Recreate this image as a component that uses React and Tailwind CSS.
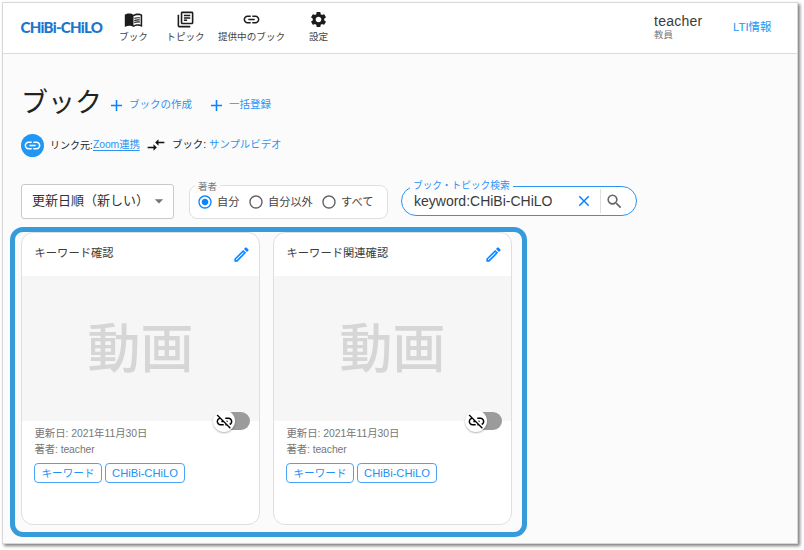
import React from "react";
import {
  MdMenuBook, MdOutlineLibraryBooks, MdLink, MdSettings, MdAdd, MdCompareArrows,
  MdArrowDropDown, MdClose, MdSearch, MdOutlineEdit, MdLinkOff,
  MdRadioButtonChecked, MdRadioButtonUnchecked,
} from "react-icons/md";

function NavItem({ icon: Icon, label, width }) {
  return (
    <a className={`flex flex-col items-center ${width}`}>
      <Icon className="size-[19px] text-[#1c1c1c]" />
      <span className="mt-[1px] ml-px text-[9.6px] leading-[14px] whitespace-nowrap text-[#444]">{label}</span>
    </a>
  );
}

function Radio({ label, checked, className }) {
  const Icon = checked ? MdRadioButtonChecked : MdRadioButtonUnchecked;
  return (
    <label className={`flex items-center ${className}`}>
      <Icon className={`size-4 shrink-0 ${checked ? "text-[#0a84ff]" : "text-[#5f5f5f]"}`} />
      <span className="ml-[4px] text-[11.2px] leading-4 whitespace-nowrap text-[#444]">{label}</span>
    </label>
  );
}

function Tag({ children, className }) {
  return (
    <span className={`flex h-5 items-center justify-center rounded border border-[#4ba3f8] text-[#2490f5] ${className}`}>
      {children}
    </span>
  );
}

function BookCard({ title }) {
  return (
    <article className="flex h-[293px] w-[239px] flex-col overflow-hidden rounded-xl border border-[#dfdfdf] bg-white">
      <header className="flex h-[43px] shrink-0 items-center justify-between pr-2 pb-[4px] pl-[12.5px]">
        <h2 className="text-[11.3px] leading-4 text-[#3c3c3c]">{title}</h2>
        <MdOutlineEdit className="mt-[3px] size-[19px] text-[#0a84ff]" />
      </header>
      <div className="relative flex h-[145px] shrink-0 items-center justify-center bg-[#f6f6f6]">
        <span className="pt-[2px] text-[53px] leading-none font-medium text-[#d6d6d6]">動画</span>
        <div className="absolute right-[9.5px] -bottom-[9px] h-[18px] w-[30px] rounded-full bg-[#9b9b9b]" />
        <div className="absolute right-[24px] -bottom-[11px] flex size-[22px] items-center justify-center rounded-full bg-white shadow-[0_1px_2px_rgba(0,0,0,0.3)]">
          <MdLinkOff className="size-[19px] text-black" />
        </div>
      </div>
      <div className="flex flex-col pt-[5px] pl-3 text-[10.4px] leading-4 text-[#777]">
        <p className="pl-[0.5px] tracking-[-0.05px]">更新日: 2021年11月30日</p>
        <p className="pl-[0.5px] tracking-[-0.1px]">著者: teacher</p>
        <div className="mt-[5px] flex gap-[3px]">
          <Tag className="w-[68px] text-[10.6px]">キーワード</Tag>
          <Tag className="w-20 text-[11.2px]">CHiBi-CHiLO</Tag>
        </div>
      </div>
    </article>
  );
}

export default function App() {
  return (
    <div className="h-[550px] w-[804px] overflow-hidden bg-white pt-[2px] pl-[2px] font-['Liberation_Sans','Noto_Sans_CJK_JP',sans-serif]">
      <div className="flex h-[542px] w-[796px] flex-col border border-[#d8d8d8] bg-[#fbfbfb] shadow-[2px_2px_3px_rgba(0,0,0,0.5)]">
        <header className="flex h-[51px] shrink-0 items-start border-b border-[#dcdcdc] bg-white">
          <div className="mt-[14px] ml-[17.5px] w-[83.5px] font-['Lato'] text-[15px] leading-[20px] font-black tracking-[-0.7px] whitespace-nowrap text-[#1976cf]">CHiBi-CHiLO</div>
          <nav className="mt-[7px] ml-[11px] flex">
            <NavItem icon={MdMenuBook} label="ブック" width="w-[36px]" />
            <NavItem icon={MdOutlineLibraryBooks} label="トピック" width="ml-[12px] w-[44px]" />
            <NavItem icon={MdLink} label="提供中のブック" width="ml-[9px] w-[70px]" />
            <NavItem icon={MdSettings} label="設定" width="ml-[17px] w-[30px]" />
          </nav>
          <div className="mt-[10px] ml-[321px] flex w-[79px] flex-col">
            <span className="text-[14px] leading-4 tracking-[0.25px] text-[#3a3a3a]">teacher</span>
            <span className="text-[9.4px] leading-[11px] text-[#777]">教員</span>
          </div>
          <a className="mt-[16px] text-[11.4px] leading-4 whitespace-nowrap text-[#2196f3]">LTI情報</a>
        </header>

        <main className="flex flex-col">
          <div className="mt-[28px] flex h-[42px] items-center pl-[18px]">
            <h1 className="w-[86px] text-[27px] leading-[42px] whitespace-nowrap text-[#222]">ブック</h1>
            <MdAdd className="mt-[5px] size-[19px] text-[#0a84ff]" />
            <span className="mt-[4px] ml-[3px] w-[78px] text-[10.5px] whitespace-nowrap text-[#2b93f4]">ブックの作成</span>
            <MdAdd className="mt-[5px] size-[19px] text-[#0a84ff]" />
            <span className="mt-[4px] ml-[3px] text-[10.5px] whitespace-nowrap text-[#2b93f4]">一括登録</span>
          </div>

          <div className="mt-[9px] flex h-6 items-center pl-[18px] text-[10.4px] whitespace-nowrap text-[#222]">
            <span className="flex size-[23px] items-center justify-center rounded-full bg-[#2196f3]">
              <MdLink className="size-[19px] text-white" />
            </span>
            <span className="ml-[6px] w-[43px] text-[10px]">リンク元:</span>
            <a className="w-[53px] tracking-[-0.1px] text-[#2b93f4] underline underline-offset-2">Zoom連携</a>
            <MdCompareArrows className="size-[20px] text-[#111]" />
            <span className="ml-[6px] w-[37px]">ブック:</span>
            <a className="text-[#2b93f4]">サンプルビデオ</a>
          </div>

          <div className="mt-[27px] flex h-[35px] items-start pl-[18px]">
            <div className="flex h-[35px] w-[153px] items-center justify-between rounded-[3px] border border-[#c9c9c9] bg-white pr-[5px] pb-px pl-[10px]">
              <span className="text-[13px] whitespace-nowrap text-[#333]">更新日順（新しい）</span>
              <MdArrowDropDown className="size-5 shrink-0 text-[#757575]" />
            </div>
            <fieldset className="relative mt-px ml-[15px] flex h-[34px] w-[199px] items-center rounded-lg border border-[#dfdfdf] bg-white pl-[7px]">
              <span className="absolute -top-[6px] left-[5px] bg-[#fbfbfb] px-[3px] text-[9.4px] leading-[13px] text-[#777]">著者</span>
              <Radio label="自分" checked className="w-[51px]" />
              <Radio label="自分以外" className="w-[73px]" />
              <Radio label="すべて" className="" />
            </fieldset>
            <div className="relative mt-[2px] ml-[13px] flex h-[30px] w-[236px] items-center rounded-full border border-[#2b93f4] bg-white pl-[12px]">
              <span className="absolute -top-[8px] left-[8px] bg-[#fbfbfb] px-[3px] text-[9.7px] leading-[14px] whitespace-nowrap text-[#2b93f4]">ブック・トピック検索</span>
              <span className="w-[161px] text-[14px] whitespace-nowrap text-[#3a3a3a]">keyword:CHiBi-CHiLO</span>
              <MdClose className="size-[18px] shrink-0 text-[#0a84ff]" />
              <span className="ml-[7px] h-[24px] w-px bg-[#dfdfdf]" />
              <MdSearch className="ml-[4px] size-[19px] shrink-0 text-[#666]" />
            </div>
          </div>

          <section className="mt-[8px] ml-[7px] flex h-[310px] w-[517px] gap-[13px] rounded-[13px] border-[5px] border-[#369bdb] pl-[6px]">
            <BookCard title="キーワード確認" />
            <BookCard title="キーワード関連確認" />
          </section>
        </main>
      </div>
    </div>
  );
}
